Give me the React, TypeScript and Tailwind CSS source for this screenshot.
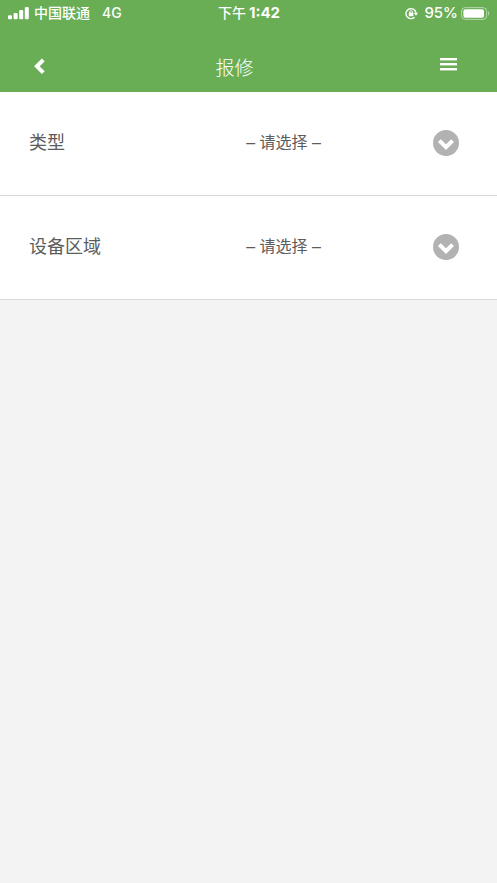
type FieldProps = { id: string; label: string };

function StatusBar() {
  return (
    <div className="grid h-[26px] grid-cols-3 items-center pr-[7px] pl-2 font-['Inter','Noto_Sans_CJK_SC',sans-serif] text-sm leading-5 whitespace-nowrap">
      <div className="flex items-center">
        <svg className="h-[13px] w-[21px]" viewBox="0 0 21 13" fill="currentColor" aria-hidden="true">
          <rect x="0" y="8.2" width="4" height="4" rx="1" />
          <rect x="5.6" y="6" width="4" height="6.2" rx="1" />
          <rect x="11.2" y="3" width="4" height="9.2" rx="1" />
          <rect x="16.8" y="0" width="4" height="12.2" rx="1" />
        </svg>
        <span className="ml-[5px] font-medium">中国联通</span>
        <span className="ml-3 font-medium">4G</span>
      </div>
      <div className="flex items-center justify-center gap-[3px]">
        <span className="font-medium">下午</span>
        <span className="text-[15px] font-bold">1:42</span>
      </div>
      <div className="flex items-center justify-end">
        <svg className="h-[13px] w-[13px]" viewBox="0 0 13 13" fill="none" aria-hidden="true">
          <path d="M9.5 10.2A5 5 0 1 1 10.9 5.6" stroke="currentColor" strokeWidth="1.4" />
          <path d="M8.7 5.7H13l-2 3.1z" fill="currentColor" />
          <rect x="3.8" y="5.6" width="4.6" height="3.6" rx=".5" fill="currentColor" />
          <path d="M4.7 5.8V5a1.4 1.4 0 0 1 2.8 0v.8" stroke="currentColor" strokeWidth=".9" />
        </svg>
        <span className="ml-1.5 text-[15px] font-medium">95%</span>
        <svg className="ml-[3px] h-[13px] w-[29px]" viewBox="0 0 29 13" fill="none" aria-hidden="true">
          <rect x=".6" y=".6" width="25" height="11.8" rx="3.6" stroke="currentColor" strokeOpacity=".5" />
          <rect x="2.4" y="2.3" width="20.6" height="8.4" rx="2" fill="currentColor" />
          <path d="M27 4.3c1.6.6 1.6 3.8 0 4.4z" fill="currentColor" fillOpacity=".5" />
        </svg>
      </div>
    </div>
  );
}

function Header() {
  return (
    <header className="bg-[#69ae55] text-white">
      <StatusBar />
      <div className="grid h-[66px] grid-cols-[1fr_auto_1fr] items-center px-6 pt-4">
        <button type="button" aria-label="返回" className="mb-0.5 flex size-8 items-center justify-center">
          <svg className="h-[17px] w-3" viewBox="0 0 12 17" fill="none" aria-hidden="true">
            <path d="M9.3 1.9 2.9 8.3l6.4 6.4" stroke="currentColor" strokeWidth="4" />
          </svg>
        </button>
        <h1 className="pt-1 pr-7 text-[19px] leading-7 font-light">报修</h1>
        <button type="button" aria-label="菜单" className="mr-[9px] mb-1.5 flex size-8 items-center justify-center justify-self-end">
          <svg className="h-3.5 w-[17px]" viewBox="0 0 17 14" fill="currentColor" aria-hidden="true">
            <rect y="1" width="17" height="2.4" />
            <rect y="6" width="17" height="2.4" />
            <rect y="11" width="17" height="2.4" />
          </svg>
        </button>
      </div>
    </header>
  );
}

function SelectField({ id, label }: FieldProps) {
  return (
    <div className="flex h-[104px] items-center border-b border-[#d8d8d8] bg-white pr-[38px] pb-px pl-[29px] text-[#5c5c5c]">
      <label htmlFor={id} className="w-[79px] shrink-0 text-lg whitespace-nowrap">
        {label}
      </label>
      <div className="relative min-w-0 flex-1">
        <select id={id} className="h-10 w-full appearance-none bg-transparent text-center text-base [text-align-last:center]">
          <option>– 请选择 –</option>
        </select>
        <span className="pointer-events-none absolute inset-y-0 right-0 flex items-center">
          <svg className="size-[26px]" viewBox="0 0 26 26" fill="none" aria-hidden="true">
            <circle cx="13" cy="13" r="13" fill="#b2b2b2" />
            <path d="m6.4 10.6 6.6 6.6 6.6-6.6" stroke="#fff" strokeWidth="4" />
          </svg>
        </span>
      </div>
    </div>
  );
}

export default function App() {
  return (
    <div className="min-h-screen bg-[#f3f3f3] font-['Liberation_Sans','Noto_Sans_CJK_SC',sans-serif]" lang="zh-CN">
      <Header />
      <main>
        <SelectField id="type" label="类型" />
        <SelectField id="area" label="设备区域" />
      </main>
    </div>
  );
}
